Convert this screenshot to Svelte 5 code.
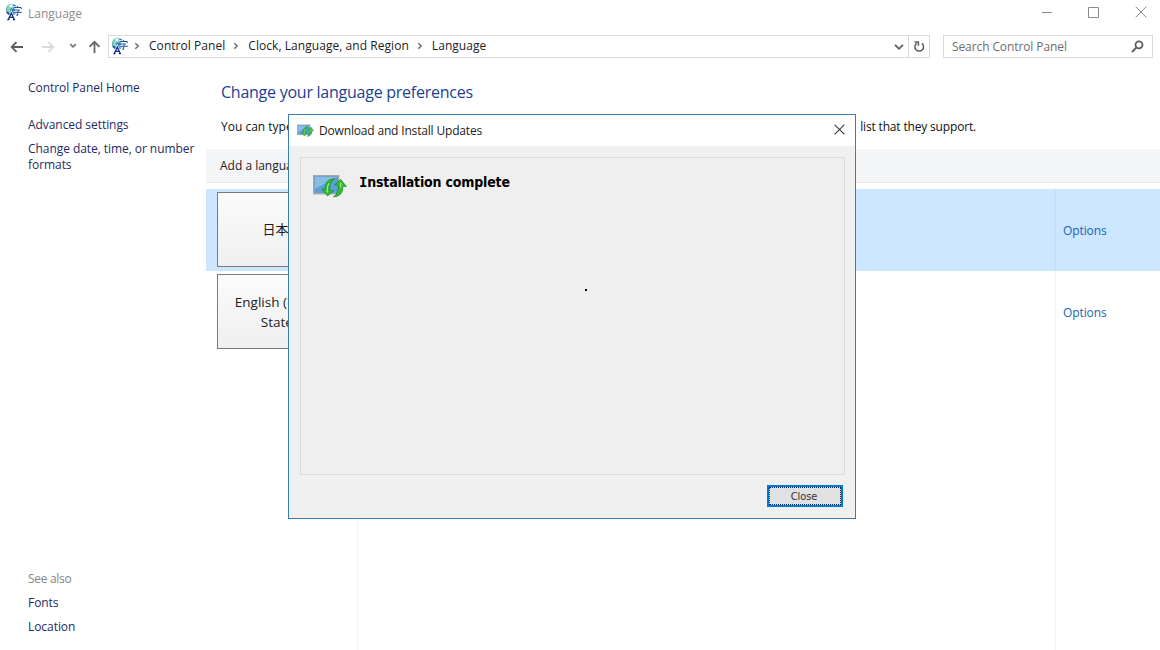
<script>
  const crumbs = ['Control Panel', 'Clock, Language, and Region', 'Language'];
  const tasks = ['Advanced settings', 'Change date, time, or number formats'];
  const seeAlso = ['Fonts', 'Location'];

  let languages = $state([
    { id: 'ja', name: '日本語', selected: true },
    { id: 'en', name: 'English (United States)', selected: false }
  ]);
  let dialogOpen = $state(true);

  function select(id) {
    languages = languages.map((l) => ({ ...l, selected: l.id === id }));
  }
</script>

{#snippet languageIcon()}
  <svg class="lang-icon" width="18" height="18" viewBox="0 0 18 18" aria-hidden="true">
    <circle cx="6.8" cy="6.6" r="5.8" fill="#2583b8" />
    <path d="M1.5 5Q4 .5 8.5 1L8 4 5.5 6 4.5 10Q1 9 1.5 5Z" fill="#86d6b4" />
    <path d="M3.5 2.6Q6 .6 8.5 1.6L6 5Z" fill="#e3f8f5" />
    <path d="M1.8 9Q4 12 7 12" fill="none" stroke="#1b4f95" stroke-width="1.4" />
    <path d="M8.8 6V4.5H16.3V6M12.5 3V4.5M10.4 7H14.6L12.7 8.6V12.4L11.2 12M8.6 9.3H16.8" fill="none" stroke="#fff" stroke-width="2.4" />
    <path d="M8.8 6V4.5H16.3V6M12.5 3V4.5M10.4 7H14.6L12.7 8.6V12.4L11.2 12M8.6 9.3H16.8" fill="none" stroke="#23509f" />
    <path d="M3.3 16.5L6.3 10L9.2 16.5M4.4 14.3H8" fill="none" stroke="#fff" stroke-width="2.6" />
    <path d="M3.3 16.5L6.3 10L9.2 16.5M4.4 14.3H8M2.3 16.6H4.4M7.9 16.6H10" fill="none" stroke="#0b2c83" stroke-width="1.3" />
  </svg>
{/snippet}

{#snippet updateIcon(width, height)}
  <svg {width} {height} viewBox="0 0 34 24" preserveAspectRatio="none" aria-hidden="true">
    <rect x=".7" y="1.7" width="25" height="18" fill="#5c9fd6" stroke="#a2a9ae" stroke-width="1.4" />
    <path d="M2 3H24L2 15Z" fill="#87bce5" />
    <path d="M21.5 4.5Q11.5 5.5 12.2 15.5L8.8 15L14.5 22L20.5 16.8L16.6 16.2Q16 9 21.5 4.5Z" fill="#35bd36" stroke="#15841d" stroke-width=".7" />
    <path d="M20.5 23Q30.6 22 29.8 12.2L33.4 12.6L27.8 5.5L21.6 10.8L25.4 11.3Q26 18.5 20.5 23Z" fill="#35bd36" stroke="#15841d" stroke-width=".7" />
    <path d="M16 9.5Q13.8 12.5 14.4 18.5M27.6 8.5V13.5" fill="none" stroke="#8eea72" stroke-width="1.3" />
  </svg>
{/snippet}

{#snippet chevron()}
  <svg class="crumb-arrow" width="6" height="8" viewBox="0 0 6 8" aria-hidden="true">
    <path d="M1.3 1.2L4.2 4L1.3 6.8" fill="none" stroke="#6a6a6a" stroke-width="1.4" />
  </svg>
{/snippet}

<div class="window">
  <header class="titlebar">
    {@render languageIcon()}
    <span class="window-title">Language</span>
    <div class="window-buttons">
      <svg width="12" height="12" viewBox="0 0 12 12"><path d="M1 6.5H11" /></svg>
      <svg width="12" height="12" viewBox="0 0 12 12"><path d="M.5 1.5H10.5V11.5H.5Z" /></svg>
      <svg width="12" height="12" viewBox="0 0 12 12"><path d="M.7 .7L11.3 11.3M11.3 .7L.7 11.3" /></svg>
    </div>
  </header>

  <nav class="navbar">
    <div class="nav-arrows">
      <svg width="14" height="12" viewBox="0 0 14 12"><path d="M13 6H1.8M6.5 1.2L1.7 6L6.5 10.8" stroke="#5b5b5b" /></svg>
      <svg width="14" height="12" viewBox="0 0 14 12"><path d="M1 6H12.2M7.5 1.2L12.3 6L7.5 10.8" stroke="#d9d9d9" /></svg>
      <svg class="recent" width="8" height="6" viewBox="0 0 8 6"><path d="M1.2 1.2L4 3.8L6.8 1.2" stroke="#777" /></svg>
      <svg width="13" height="14" viewBox="0 0 13 14"><path d="M6.5 13V2M1.5 6.8L6.5 1.8L11.5 6.8" stroke="#666" /></svg>
    </div>
    <div class="address">
      {@render languageIcon()}
      {#each crumbs as crumb}
        {@render chevron()}
        <span class="crumb">{crumb}</span>
      {/each}
      <svg class="drop" width="10" height="8" viewBox="0 0 10 8"><path d="M1 1.8L5 5.8L9 1.8" /></svg>
      <span class="refresh">
        <svg width="12" height="14" viewBox="0 0 12 14">
          <path d="M8.9 3.4A4.3 4.3 0 1 1 3.6 3.4" />
          <path d="M1.6 2H5.4V5.8" />
        </svg>
      </span>
    </div>
    <div class="search">
      <span>Search Control Panel</span>
      <svg width="13" height="13" viewBox="0 0 13 13"><circle cx="8" cy="4.8" r="3.5" /><path d="M5.4 7.5L1 12" /></svg>
    </div>
  </nav>

  <div class="body">
    <aside class="sidebar">
      <span class="link home">Control Panel Home</span>
      {#each tasks as task}
        <span class="link">{task}</span>
      {/each}
      <div class="see-also">
        <span class="muted">See also</span>
        {#each seeAlso as item}
          <span class="link">{item}</span>
        {/each}
      </div>
    </aside>

    <main class="content">
      <h1>Change your language preferences</h1>
      <div class="intro">
        <span>You can type</span>
        <span class="intro-end">list that they support.</span>
      </div>
      <div class="toolbar">Add a language</div>
      <div class="list">
        {#each languages as language (language.id)}
          <!-- svelte-ignore a11y_click_events_have_key_events, a11y_no_static_element_interactions -->
          <div class="row" class:selected={language.selected} onclick={() => select(language.id)}>
            <div class="cell name"><div class="tile" lang={language.id}>{language.name}</div></div>
            <div class="cell"></div>
            <div class="cell options">Options</div>
          </div>
        {/each}
        <div class="row filler">
          <div class="cell"></div>
          <div class="cell"></div>
          <div class="cell"></div>
        </div>
      </div>
    </main>
  </div>

  {#if dialogOpen}
    <div class="dialog" role="dialog" aria-label="Download and Install Updates">
      <div class="dialog-title">
        {@render updateIcon(17, 13)}
        <span>Download and Install Updates</span>
        <button class="x" aria-label="Close dialog" onclick={() => (dialogOpen = false)}>
          <svg width="11" height="11" viewBox="0 0 11 11"><path d="M.6 .6L10.4 10.4M10.4 .6L.6 10.4" /></svg>
        </button>
      </div>
      <div class="dialog-body">
        <div class="panel">
          <div class="status">
            {@render updateIcon(34, 24)}
            <h2><span class="cap">I</span>nstallation complete</h2>
          </div>
          <i class="dot"></i>
        </div>
        <button class="close" onclick={() => (dialogOpen = false)}><span>Close</span></button>
      </div>
    </div>
  {/if}
</div>

<style>
  :global(body) {
    margin: 0;
    background: #fff;
  }

  .window {
    position: relative;
    display: flex;
    flex-direction: column;
    width: 1160px;
    height: 650px;
    overflow: hidden;
    background: #fff;
    color: #1c1c1c;
    font: 12px/16px 'Open Sans', 'Noto Sans', sans-serif;
  }

  .window * {
    box-sizing: border-box;
  }

  svg {
    display: block;
    flex: none;
  }

  /* Title bar */
  .titlebar {
    display: flex;
    align-items: center;
    height: 25px;
    padding: 0 13px 2px 5px;
  }

  .window-title {
    margin-left: 5px;
    padding-top: 4px;
    color: #8d8d8d;
  }

  .window-buttons {
    display: flex;
    gap: 35px;
    margin-left: auto;
  }

  .window-buttons path {
    fill: none;
    stroke: #8a8a8a;
  }

  /* Navigation bar */
  .navbar {
    display: flex;
    height: 42px;
    padding: 10px 7px 9px 10px;
  }

  .nav-arrows {
    display: flex;
    align-items: center;
    width: 98px;
    gap: 17px;
  }

  .nav-arrows path {
    fill: none;
    stroke-width: 1.8;
  }

  .nav-arrows .recent {
    margin: 0 -5px 2px -3px;
  }

  .nav-arrows .recent + svg {
    margin-left: -1px;
  }

  .address,
  .search {
    display: flex;
    align-items: center;
    height: 23px;
    border: 1px solid #d9d9d9;
  }

  .address {
    width: 822px;
    padding-left: 2px;
  }

  .address .lang-icon {
    margin-bottom: 2px;
  }

  .address .crumb-arrow {
    margin: 0 9px 1px 8px;
  }

  .address .lang-icon + .crumb-arrow {
    margin-left: 5px;
  }

  .crumb {
    padding-bottom: 2px;
    letter-spacing: 0.05px;
    white-space: nowrap;
  }

  .drop {
    margin-left: auto;
  }

  .drop path,
  .refresh path,
  .search path,
  .search circle {
    fill: none;
    stroke: #5e5e5e;
    stroke-width: 1.8;
  }

  .refresh {
    display: flex;
    align-items: center;
    justify-content: center;
    width: 21px;
    height: 21px;
    margin-left: 4px;
    border-left: 1px solid #d9d9d9;
  }

  .refresh path {
    stroke-width: 1.5;
  }

  .search {
    flex: 1;
    justify-content: space-between;
    margin-left: 13px;
    padding: 0 8px;
    color: #6d6d6d;
    letter-spacing: -0.1px;
  }

  /* Sidebar */
  .body {
    display: flex;
    flex: 1;
    min-height: 0;
  }

  .sidebar {
    display: flex;
    flex-direction: column;
    gap: 8px;
    width: 206px;
    padding: 13px 8px 15px 28px;
    letter-spacing: -0.06px;
  }

  .link {
    color: #1f2a66;
  }

  .home {
    margin-bottom: 13px;
  }

  .see-also {
    display: flex;
    flex-direction: column;
    gap: 8px;
    margin-top: auto;
  }

  .muted {
    color: #858585;
    letter-spacing: -0.3px;
  }

  /* Content */
  .content {
    display: flex;
    flex: 1;
    flex-direction: column;
  }

  h1 {
    margin: 13px 0 0 15px;
    color: #1a3f94;
    font-size: 16px;
    font-weight: 400;
    letter-spacing: -0.25px;
    line-height: 25px;
  }

  .intro {
    display: flex;
    margin: 14px 0 14px 15px;
    color: #111;
  }

  .intro-end {
    margin-left: auto;
    margin-right: 184px;
    letter-spacing: -0.17px;
  }

  .toolbar {
    height: 34px;
    padding: 9px 14px;
    border-bottom: 1px solid #e8e8e8;
    background: #f4f5f7;
  }

  .list {
    display: flex;
    flex: 1;
    flex-direction: column;
    margin-top: 6px;
  }

  .row {
    display: grid;
    grid-template-columns: 151px 698px 1fr;
    height: 82px;
  }

  .row.selected {
    background: #cce6ff;
  }

  .row.filler {
    flex: 1;
  }

  .cell + .cell {
    border-left: 1px solid #f2f3f9;
  }

  .selected .cell + .cell {
    border-color: #c0dcf6;
  }

  .name {
    padding: 3px 0 0 11px;
  }

  .tile {
    display: flex;
    align-items: center;
    justify-content: center;
    width: 130px;
    height: 75px;
    padding: 0 12px;
    border: 1px solid #777b80;
    background: linear-gradient(#fbfbfb, #efefef);
    font: 13.5px/20px 'Open Sans', 'Noto Sans CJK JP', sans-serif;
    text-align: center;
  }

  .tile:lang(ja) {
    padding-bottom: 2px;
    font-size: 13px;
  }

  .options {
    padding: 34px 0 0 7px;
    color: #1763b5;
    letter-spacing: -0.1px;
  }

  /* Dialog floating over the window */
  .dialog {
    position: absolute;
    top: 114px;
    left: 288px;
    display: flex;
    flex-direction: column;
    width: 568px;
    height: 405px;
    border: 1px solid #3a7eb5;
    background: #f0f0f0;
  }

  .dialog-title {
    display: flex;
    align-items: center;
    height: 31px;
    padding: 0 10px 1px 8px;
    background: #fff;
  }

  .dialog-title span {
    margin-left: 5px;
    padding-top: 1px;
    letter-spacing: -0.17px;
  }

  .x {
    display: flex;
    margin: 0 0 1px auto;
    padding: 0;
    border: 0;
    background: none;
  }

  .x path {
    stroke: #444;
    stroke-width: 1.2;
  }

  .dialog-body {
    display: flex;
    flex: 1;
    flex-direction: column;
    padding: 11px 10px 11px 11px;
  }

  .panel {
    position: relative;
    height: 318px;
    padding: 16px 12px;
    border: 1px solid #dcdcdc;
    background: #efefef;
  }

  .status {
    display: flex;
  }

  .status h2 {
    margin: -1px 0 0 12px;
    color: #000;
    font: 700 14px/18px 'DejaVu Sans Condensed', 'DejaVu Sans', sans-serif;
    font-stretch: condensed;
    letter-spacing: -0.18px;
  }

  /* Tahoma-style capital I with bars */
  .cap {
    font-family: 'DejaVu Sans Mono', monospace;
  }

  .dot {
    position: absolute;
    top: 131px;
    left: 284px;
    width: 2px;
    height: 2px;
    background: #000;
  }

  .close {
    align-self: flex-end;
    width: 76px;
    height: 22px;
    margin: 10px 2px 0 0;
    padding: 0;
    border: 2px solid #0078d7;
    background: #e1e1e1;
    color: #333;
    font: 11px/17px 'DejaVu Sans Condensed', 'DejaVu Sans', sans-serif;
    font-stretch: condensed;
    letter-spacing: -0.1px;
  }

  .close span {
    display: block;
    height: 18px;
    padding-right: 2px;
    border: 1px dotted #123;
  }
</style>
